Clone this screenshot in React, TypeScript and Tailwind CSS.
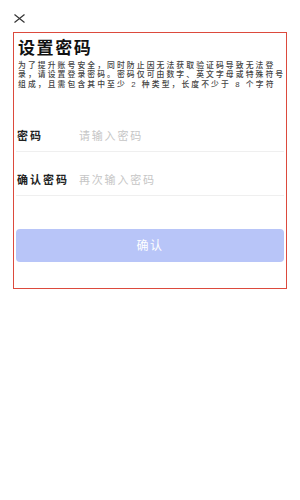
const font = { fontFamily: '"Noto Sans CJK SC", "Noto Sans", sans-serif' }
const descFont = { fontFamily: '"Liberation Sans", "Noto Sans CJK SC", sans-serif' }

const descLines = [
  '为了提升账号安全，同时防止因无法获取验证码导致无法登',
  '录，请设置登录密码。密码仅可由数字、英文字母或特殊符号',
  '组成，且需包含其中至少 2 种类型，长度不少于 8 个字符',
]

function Field({ label, placeholder }: { label: string; placeholder: string }) {
  return (
    <div className="flex h-[44px] items-start border-b border-[#efefef] pt-[19px]">
      <span className="w-[63px] shrink-0 pl-[1px] text-[11px] leading-[16px] font-bold tracking-[2px] text-[#222]">
        {label}
      </span>
      <input
        type="password"
        placeholder={placeholder}
        className="min-w-0 flex-1 bg-transparent text-[11px] leading-[16px] tracking-[1.8px] text-[#222] outline-none placeholder:text-[#c6c6c6]"
        style={font}
      />
    </div>
  )
}

export default function App() {
  return (
    <div className="h-[500px] w-[300px] bg-white" style={font}>
      {/* close */}
      <div className="h-[32px] pl-[14px] pt-[14px]">
        <svg width="11" height="9" viewBox="0 0 11 9" fill="none" stroke="#333" strokeWidth="1.2">
          <path d="M0.5 0.5 L10.5 8.5 M10.5 0.5 L0.5 8.5" />
        </svg>
      </div>

      <div className="mx-[13px] h-[257px] w-[274px] border-[1.5px] border-[#dc4a3d] px-[2px]">
        <h1 className="mt-[4px] pl-[2px] text-[17px] leading-[20px] font-bold tracking-[1.6px] text-[#111]">
          设置密码
        </h1>
        <p
          className="mt-[4px] pl-[2px] text-[7.8px] leading-[9.3px] font-medium tracking-[2.1px] text-[#444]"
          style={descFont}
        >
          {descLines.map((line) => (
            <span key={line} className="block whitespace-nowrap">
              {line}
            </span>
          ))}
        </p>

        <div className="mt-[19px]">
          <Field label="密码" placeholder="请输入密码" />
          <Field label="确认密码" placeholder="再次输入密码" />
        </div>

        <button
          disabled
          className="mt-[33px] flex h-[33px] w-full items-center justify-center rounded-[4px] bg-[#b8c5f8] text-[12px] tracking-[1.5px] text-white"
          style={font}
        >
          确认
        </button>
      </div>
    </div>
  )
}
